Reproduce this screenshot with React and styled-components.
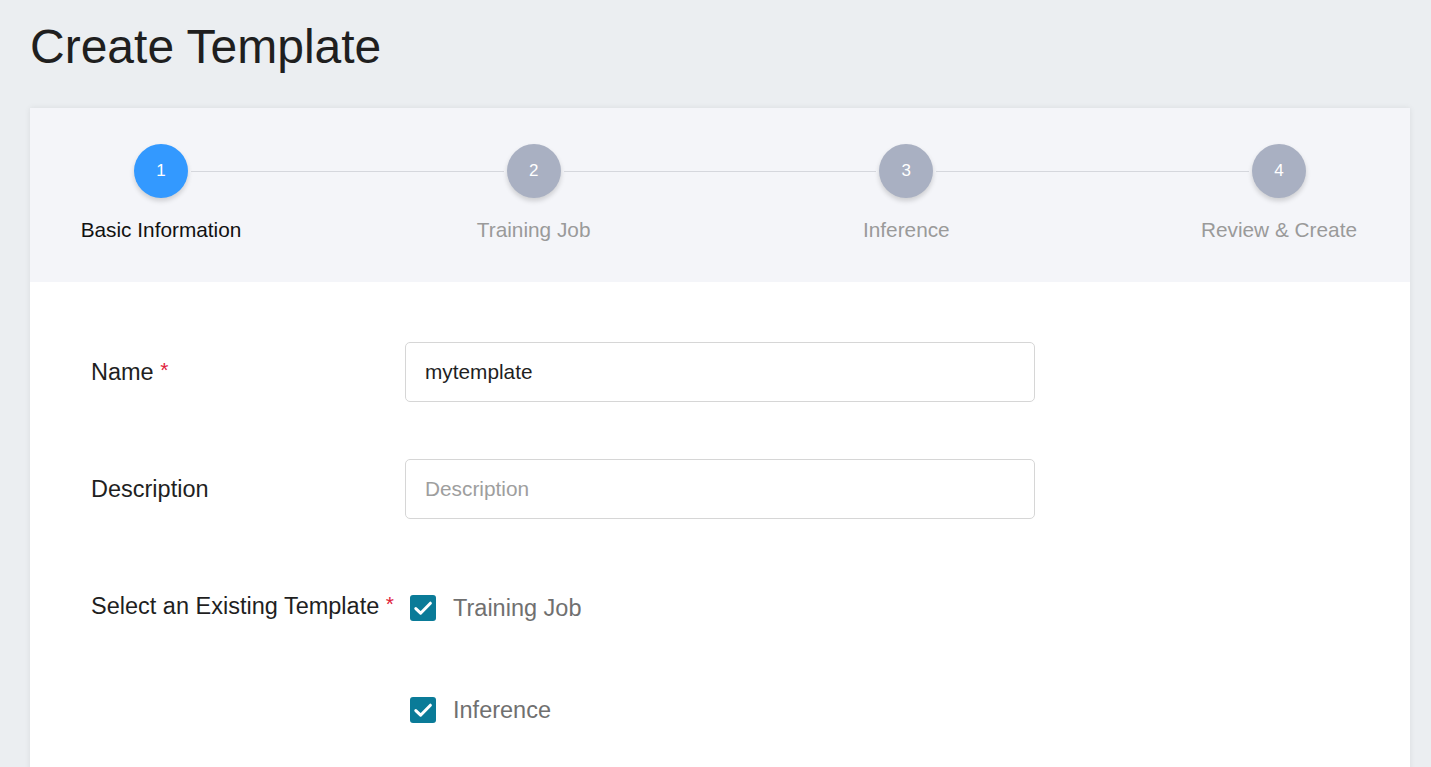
import React from 'react';
import styled, { createGlobalStyle } from 'styled-components';

const steps = ['Basic Information', 'Training Job', 'Inference', 'Review & Create'];
const active = 0;

const GlobalStyle = createGlobalStyle`
  html, body {
    margin: 0;
    padding: 0;
    background: #ebeef1;
    font-family: 'Liberation Sans', Arial, sans-serif;
  }
`;

export default function App() {
  return (
    <Page>
      <GlobalStyle />
      <Title>Create Template</Title>
      <Card>
        <Stepper>
          <CircleRow>
            {steps.map((s, i) => (
              <React.Fragment key={s}>
                {i > 0 && <Connector />}
                <Circle active={i === active}>{i + 1}</Circle>
              </React.Fragment>
            ))}
          </CircleRow>
          <LabelRow>
            {steps.map((s, i) => (
              <StepLabel key={s} active={i === active}>
                {s}
              </StepLabel>
            ))}
          </LabelRow>
        </Stepper>
        <Body>
          <FieldRow>
            <FieldLabel>
              Name <Req>*</Req>
            </FieldLabel>
            <Input defaultValue="mytemplate" />
          </FieldRow>
          <FieldRow>
            <FieldLabel>Description</FieldLabel>
            <Input placeholder="Description" />
          </FieldRow>
          <CheckRow>
            <FieldLabel top>
              Select an Existing Template <Req>*</Req>
            </FieldLabel>
            <CheckList>
              <CheckItem>
                <Box>
                  <CheckMark />
                </Box>
                <CheckText>Training Job</CheckText>
              </CheckItem>
              <CheckItem>
                <Box>
                  <CheckMark />
                </Box>
                <CheckText>Inference</CheckText>
              </CheckItem>
            </CheckList>
          </CheckRow>
        </Body>
      </Card>
    </Page>
  );
}

const CheckMark = () => (
  <svg width="26" height="26" viewBox="0 0 26 26">
    <path
      d="M5.8 13.6 L10.6 18.2 L20.4 8.2"
      fill="none"
      stroke="#fff"
      strokeWidth="3"
      strokeLinecap="round"
      strokeLinejoin="round"
    />
  </svg>
);

const Page = styled.div`
  padding: 18px 21px 0 30px;
  min-height: 767px;
  box-sizing: border-box;
`;

const Title = styled.h1`
  margin: 0 0 32px 0;
  font-size: 48px;
  font-weight: 400;
  line-height: 58px;
  color: #1f1f1f;
`;

const Card = styled.div`
  background: #fff;
  box-shadow: 0 0 6px rgba(0, 0, 0, 0.08);
`;

const Stepper = styled.div`
  background: #f4f5f9;
  height: 174px;
  box-sizing: border-box;
  padding-top: 36px;
`;

const CircleRow = styled.div`
  display: flex;
  align-items: center;
  padding: 0 104px;
`;

const Connector = styled.div`
  flex: 1;
  height: 1px;
  background: #d5d7dd;
  margin: 0 3px;
`;

const Circle = styled.div`
  width: 54px;
  height: 54px;
  border-radius: 50%;
  background: ${p => (p.active ? '#3399ff' : '#a9b0c2')};
  color: #fff;
  font-size: 17px;
  display: flex;
  align-items: center;
  justify-content: center;
  box-shadow: 0 3px 5px rgba(0, 0, 0, 0.16);
  flex-shrink: 0;
`;

const LabelRow = styled.div`
  display: flex;
  justify-content: space-between;
  padding: 0 31px;
  margin-top: 20px;
`;

const StepLabel = styled.div`
  width: 200px;
  text-align: center;
  font-size: 20.8px;
  line-height: 24px;
  color: ${p => (p.active ? '#111' : '#9a9a9a')};
`;

const Body = styled.div`
  padding: 60px 61px 120px;
`;

const FieldRow = styled.div`
  display: flex;
  align-items: center;
  margin-bottom: 57px;
`;

const CheckRow = styled.div`
  display: flex;
  align-items: flex-start;
`;

const FieldLabel = styled.div`
  width: 314px;
  flex-shrink: 0;
  font-size: 23.5px;
  color: #1f1f1f;
  line-height: 28px;
  margin-top: ${p => (p.top ? '16px' : '0')};
`;

const Req = styled.span`
  color: #e0213a;
  font-size: 21px;
  vertical-align: top;
  position: relative;
  top: -2px;
`;

const Input = styled.input`
  width: 630px;
  height: 60px;
  box-sizing: border-box;
  border: 1px solid #d6d6d6;
  border-radius: 5px;
  padding: 0 19px;
  font-family: 'Liberation Sans', Arial, sans-serif;
  font-size: 20.8px;
  color: #1f1f1f;
  background: #fff;
  outline: none;
  &::placeholder {
    color: #9e9e9e;
  }
`;

const CheckList = styled.div`
  display: flex;
  flex-direction: column;
  gap: 74px;
  padding-left: 5px;
  padding-top: 18px;
`;

const CheckItem = styled.label`
  display: flex;
  align-items: center;
  gap: 17px;
`;

const Box = styled.span`
  width: 26px;
  height: 26px;
  border-radius: 3px;
  background: #0a7b98;
  display: flex;
  align-items: center;
  justify-content: center;
`;

const CheckText = styled.span`
  font-size: 23.5px;
  color: #707070;
  line-height: 28px;
`;
